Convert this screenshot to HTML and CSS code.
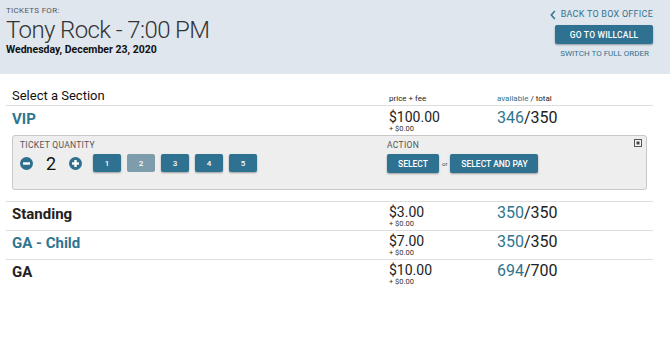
FILE: index.html
```html
<!DOCTYPE html>
<html>
<head>
<meta charset="utf-8">
<link rel="stylesheet" href="styles.css">
</head>
<body>
<header class="top">
  <div class="event">
    <div class="label">TICKETS FOR:</div>
    <h1 class="title">Tony Rock - 7:00 PM</h1>
    <div class="date">Wednesday, December 23, 2020</div>
  </div>
  <div class="actions">
    <a class="back"><svg class="chev" width="6" height="10" viewBox="0 0 6 10"><path d="M4.8 1 L1.3 5 L4.8 9" fill="none" stroke="currentColor" stroke-width="1.5"/></svg>BACK TO BOX OFFICE</a>
    <button class="btn btn-wide">GO TO WILLCALL</button>
    <a class="switch">SWITCH TO FULL ORDER</a>
  </div>
</header>
<main class="content">
  <div class="row head">
    <div class="c-name">Select a Section</div>
    <div class="c-price small">price + fee</div>
    <div class="c-avail small"><span class="teal">available</span> / total</div>
  </div>
  <div class="row open">
    <div class="c-name name teal">VIP</div>
    <div class="c-price"><div class="price">$100.00</div><div class="fee">+ $0.00</div></div>
    <div class="c-avail avail"><span class="teal">346</span>/350</div>
  </div>
  <div class="panel">
    <div class="qty">
      <div class="plabel">TICKET QUANTITY</div>
      <div class="qrow">
        <svg class="circ" width="13" height="13" viewBox="0 0 13 13"><circle cx="6.5" cy="6.5" r="6.5" fill="#2f6f8d"/><rect x="3" y="5.3" width="7" height="2.4" fill="#fff"/></svg>
        <span class="qnum">2</span>
        <svg class="circ" width="13" height="13" viewBox="0 0 13 13"><circle cx="6.5" cy="6.5" r="6.5" fill="#2f6f8d"/><rect x="3" y="5.3" width="7" height="2.4" fill="#fff"/><rect x="5.3" y="3" width="2.4" height="7" fill="#fff"/></svg>
        <div class="nums">
          <button class="btn num">1</button>
          <button class="btn num dis">2</button>
          <button class="btn num">3</button>
          <button class="btn num">4</button>
          <button class="btn num">5</button>
        </div>
      </div>
    </div>
    <div class="act">
      <div class="plabel">ACTION</div>
      <div class="arow">
        <button class="btn sel">SELECT</button>
        <span class="or">or</span>
        <button class="btn pay">SELECT AND PAY</button>
      </div>
    </div>
    <svg class="close" width="8" height="8" viewBox="0 0 8 8"><rect x="0.5" y="0.5" width="7" height="7" fill="#f4f4f4" stroke="#555" stroke-width="1"/><rect x="2.5" y="2.5" width="3" height="3" fill="#444"/></svg>
  </div>
  <div class="row line">
    <div class="c-name name">Standing</div>
    <div class="c-price"><div class="price">$3.00</div><div class="fee">+ $0.00</div></div>
    <div class="c-avail avail"><span class="teal">350</span>/350</div>
  </div>
  <div class="row line">
    <div class="c-name name teal">GA - Child</div>
    <div class="c-price"><div class="price">$7.00</div><div class="fee">+ $0.00</div></div>
    <div class="c-avail avail"><span class="teal">350</span>/350</div>
  </div>
  <div class="row line">
    <div class="c-name name">GA</div>
    <div class="c-price"><div class="price">$10.00</div><div class="fee">+ $0.00</div></div>
    <div class="c-avail avail"><span class="teal">694</span>/700</div>
  </div>
</main>
</body>
</html>
```
FILE: styles.css
```css
* { box-sizing: border-box; }
html, body { margin: 0; padding: 0; background: #fff; }
body { font-family: Roboto, "Noto Sans", sans-serif; color: #222; }

.top {
  background: #dfe6ee;
  height: 74px;
  display: flex;
  justify-content: space-between;
  padding: 6px 17px 0 6px;
}
.label { font-size: 8px; line-height: 10px; color: #555; letter-spacing: 0.3px; }
.title { margin: 0; font-weight: 300; font-size: 24px; line-height: 28px; color: #333; letter-spacing: -0.6px; }
.date { font-weight: 700; font-size: 10.5px; line-height: 12px; color: #111; }

.actions { display: flex; flex-direction: column; align-items: flex-end; padding-top: 2px; }
.back { font-size: 9px; line-height: 13px; color: #2f7390; display: flex; align-items: center; gap: 5px; letter-spacing: 0.25px; }
.chev { display: block; }
.switch { font-size: 8px; line-height: 10px; color: #2f7390; margin-top: 5px; margin-right: 4px; }

.btn {
  font-family: Roboto, "Noto Sans", sans-serif;
  background: #2f7190;
  color: #fff;
  border: 0;
  border-radius: 2px;
  box-shadow: 0 1px 2px rgba(0,0,0,0.35);
  font-weight: 500;
  padding: 0;
  cursor: pointer;
}
.btn-wide { width: 98px; height: 19px; font-size: 8.5px; margin-top: 4px; letter-spacing: 0.2px; }

.content { padding: 0 17px 0 6px; margin-top: 14px; }
.row { display: grid; grid-template-columns: 377px 108px 1fr; align-items: start; padding-left: 6px; }
.row.head { height: 18px; border-bottom: 1px solid #ddd; align-items: end; padding-bottom: 2px; }
.row.head .c-name { font-size: 13px; line-height: 16px; color: #111; }
.small { font-size: 8px; line-height: 10px; color: #222; }
.teal { color: #2f7590; }
.row.open { height: 29px; padding-top: 4px; }
.row.line { height: 29px; border-top: 1px solid #ddd; padding-top: 3px; }
.name { font-weight: 700; font-size: 15px; line-height: 18px; }
.price { font-size: 14px; line-height: 15px; }
.fee { font-size: 7.5px; line-height: 8px; color: #333; }
.avail { font-size: 16px; line-height: 18px; color: #222; margin-top: -1px; }

.panel {
  position: relative;
  margin: 0 6px 11px 6px;
  height: 55px;
  background: #eeeeee;
  border: 1px solid #c8c8c8;
  border-radius: 3px;
  display: grid;
  grid-template-columns: 367px 1fr;
  padding: 4px 0 0 7px;
}
.plabel { font-size: 8.5px; line-height: 10px; color: #555; letter-spacing: 0.3px; }
.qrow { display: flex; align-items: center; margin-top: 4px; height: 18px; }
.circ { display: block; }
.qnum { font-size: 18px; width: 36px; text-align: center; color: #111; }
.nums { display: flex; gap: 6px; margin-left: 11px; }
.num { width: 28px; height: 18px; font-size: 8px; }
.num.dis { background: #7d9dac; box-shadow: none; }
.arow { display: flex; align-items: center; margin-top: 4px; }
.sel { width: 52px; height: 19px; font-size: 8.5px; }
.pay { width: 88px; height: 19px; font-size: 8.5px; }
.or { font-size: 6px; color: #444; margin: 0 3px; }
.close { position: absolute; right: 4px; top: 3px; display: block; }
```
